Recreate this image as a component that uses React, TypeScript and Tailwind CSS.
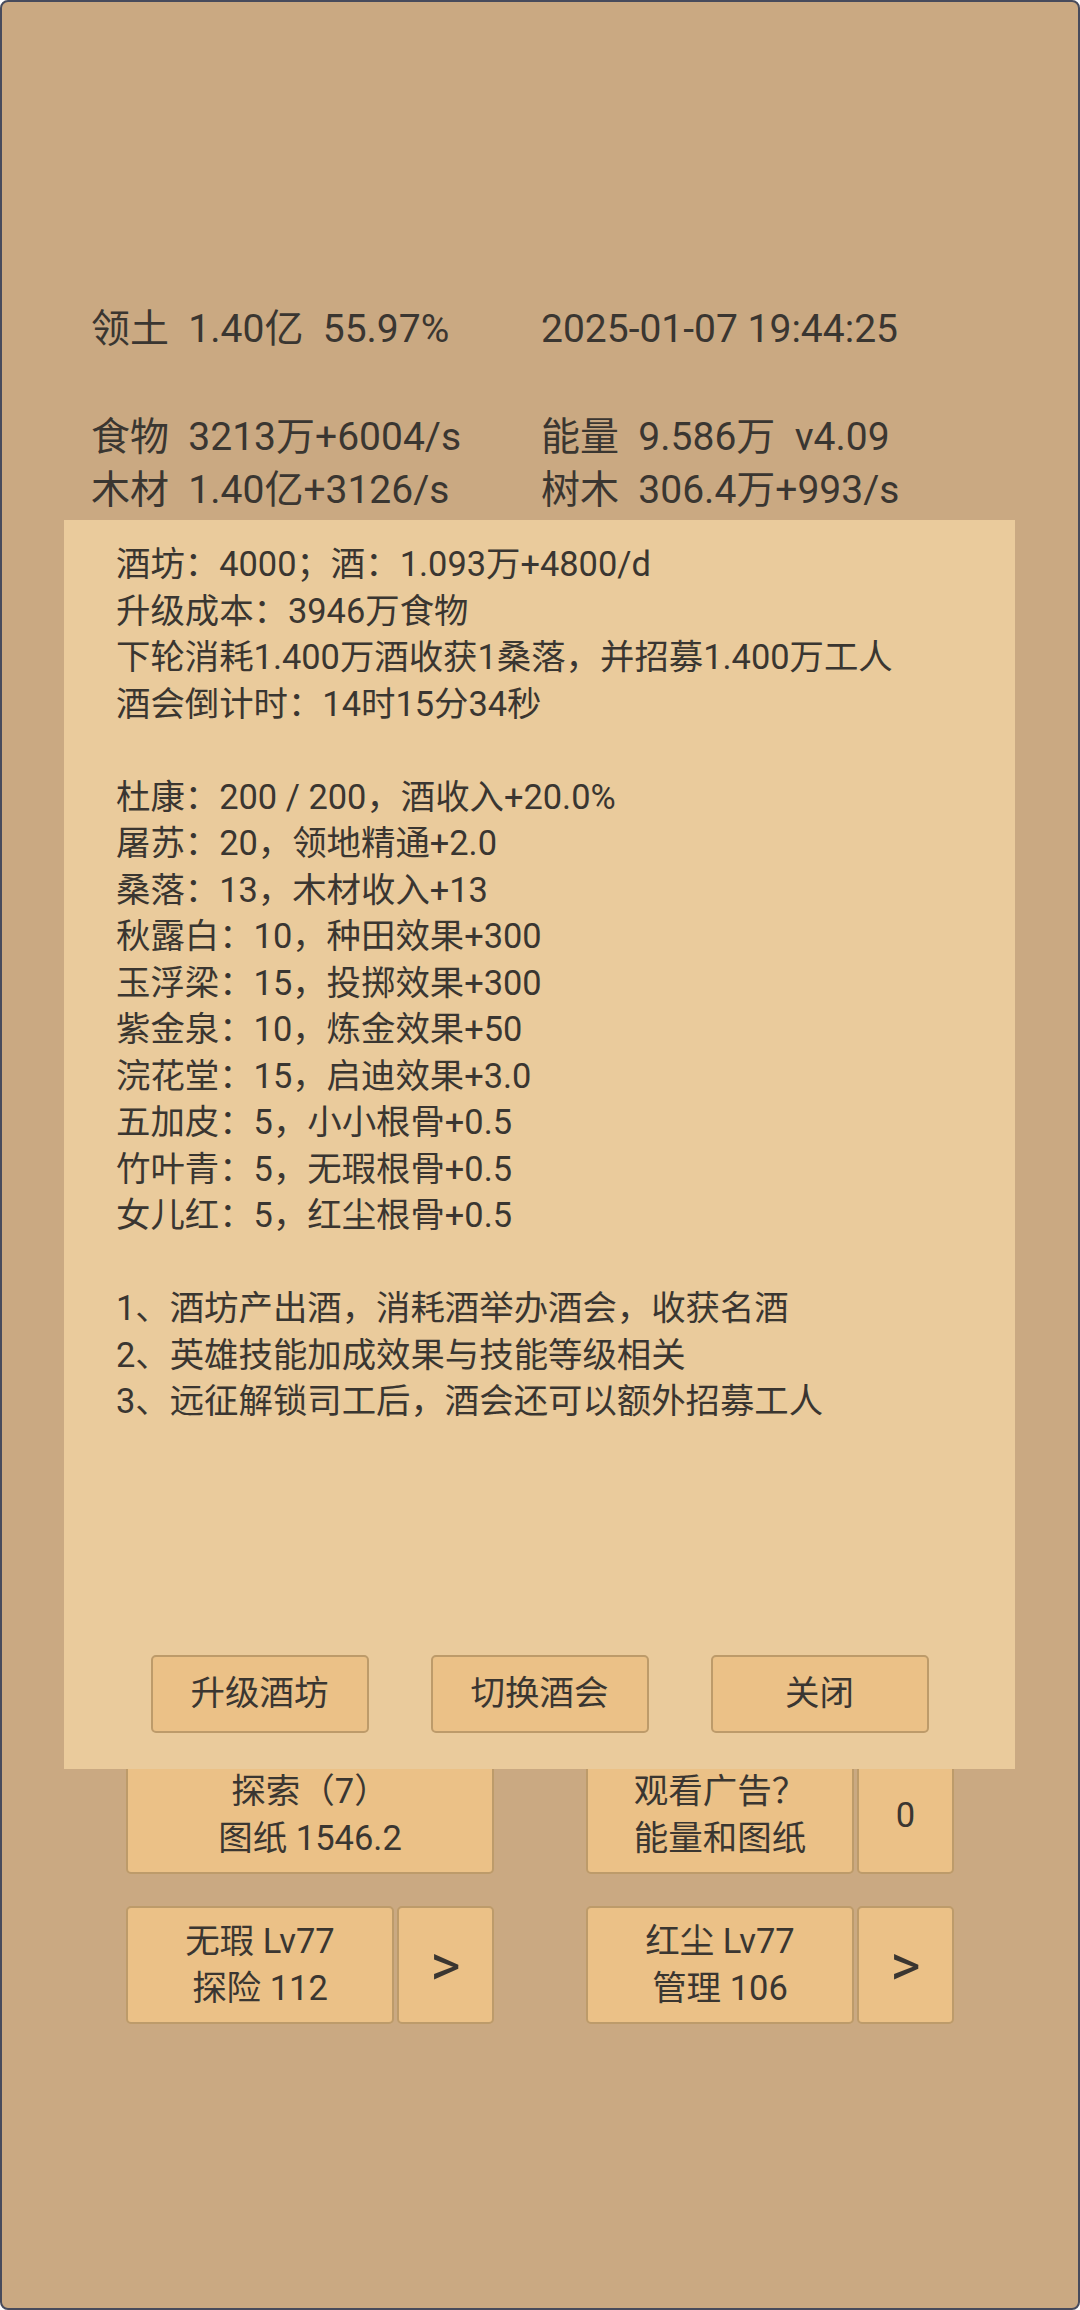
import React from "react";

const statRows = [
  ["食物  3213万+6004/s", "能量  9.586万  v4.09"],
  ["木材  1.40亿+3126/s", "树木  306.4万+993/s"],
];

const panelLines = [
  "酒坊：4000；酒：1.093万+4800/d",
  "升级成本：3946万食物",
  "下轮消耗1.400万酒收获1桑落，并招募1.400万工人",
  "酒会倒计时：14时15分34秒",
  "",
  "杜康：200 / 200，酒收入+20.0%",
  "屠苏：20，领地精通+2.0",
  "桑落：13，木材收入+13",
  "秋露白：10，种田效果+300",
  "玉浮梁：15，投掷效果+300",
  "紫金泉：10，炼金效果+50",
  "浣花堂：15，启迪效果+3.0",
  "五加皮：5，小小根骨+0.5",
  "竹叶青：5，无瑕根骨+0.5",
  "女儿红：5，红尘根骨+0.5",
  "",
  "1、酒坊产出酒，消耗酒举办酒会，收获名酒",
  "2、英雄技能加成效果与技能等级相关",
  "3、远征解锁司工后，酒会还可以额外招募工人",
];

function GameButton({ className, children }: { className?: string; children: React.ReactNode }) {
  return (
    <div
      className={
        "flex flex-col items-center justify-center rounded-[5px] border-2 border-[#bd9b6a] bg-[#ebc187] text-center " +
        (className ?? "")
      }
    >
      {children}
    </div>
  );
}

export default function App() {
  return (
    <div className="relative flex h-[2310px] w-[1080px] flex-col overflow-hidden rounded-[8px] border-2 border-[#474b5c] bg-[#caa982] font-['Roboto','Noto_Sans_CJK_SC',sans-serif] text-[#3a3631]">
      {/* Header stats */}
      <div className="whitespace-pre pl-[89px] pt-[298px] text-[39px]">
        <div className="grid h-[54px] grid-cols-[450px_1fr] items-center">
          <span>领土  1.40亿  55.97%</span>
          <span>2025-01-07 19:44:25</span>
        </div>
        <div className="h-[54px]" />
        {statRows.map((row) => (
          <div key={row[0]} className="grid h-[53px] grid-cols-[450px_1fr] items-center">
            <span>{row[0]}</span>
            <span>{row[1]}</span>
          </div>
        ))}
      </div>

      {/* Bottom buttons */}
      <div className="mt-auto flex flex-col gap-[32px] px-[124px] pb-[284px] text-[34.5px] leading-[47px]">
        <div className="flex justify-between">
          <GameButton className="h-[118px] w-[368px]">
            <span>探索（7）</span>
            <span>图纸 1546.2</span>
          </GameButton>
          <div className="flex gap-[3px]">
            <GameButton className="h-[118px] w-[268px]">
              <span>观看广告？</span>
              <span>能量和图纸</span>
            </GameButton>
            <GameButton className="h-[118px] w-[97px]">
              <span>0</span>
            </GameButton>
          </div>
        </div>
        <div className="flex justify-between">
          <div className="flex gap-[3px]">
            <GameButton className="h-[118px] w-[268px]">
              <span>无瑕 Lv77</span>
              <span>探险 112</span>
            </GameButton>
            <GameButton className="h-[118px] w-[97px] text-[58px]">
              <span>&gt;</span>
            </GameButton>
          </div>
          <div className="flex gap-[3px]">
            <GameButton className="h-[118px] w-[268px]">
              <span>红尘 Lv77</span>
              <span>管理 106</span>
            </GameButton>
            <GameButton className="h-[118px] w-[97px] text-[58px]">
              <span>&gt;</span>
            </GameButton>
          </div>
        </div>
      </div>

      {/* Tavern dialog */}
      <div className="absolute left-[62px] top-[518px] flex h-[1249px] w-[951px] flex-col bg-[#eacb9c]">
        <div className="whitespace-pre pl-[52px] pt-[21px] text-[34.4px] leading-[46.5px]">
          {panelLines.map((line, i) => (
            <div key={i} className="h-[46.5px]">
              {line}
            </div>
          ))}
        </div>
        <div className="mt-auto flex justify-center gap-[62px] pb-[36px] text-[34.5px]">
          <GameButton className="h-[78px] w-[218px]">升级酒坊</GameButton>
          <GameButton className="h-[78px] w-[218px]">切换酒会</GameButton>
          <GameButton className="h-[78px] w-[218px]">关闭</GameButton>
        </div>
      </div>
    </div>
  );
}
